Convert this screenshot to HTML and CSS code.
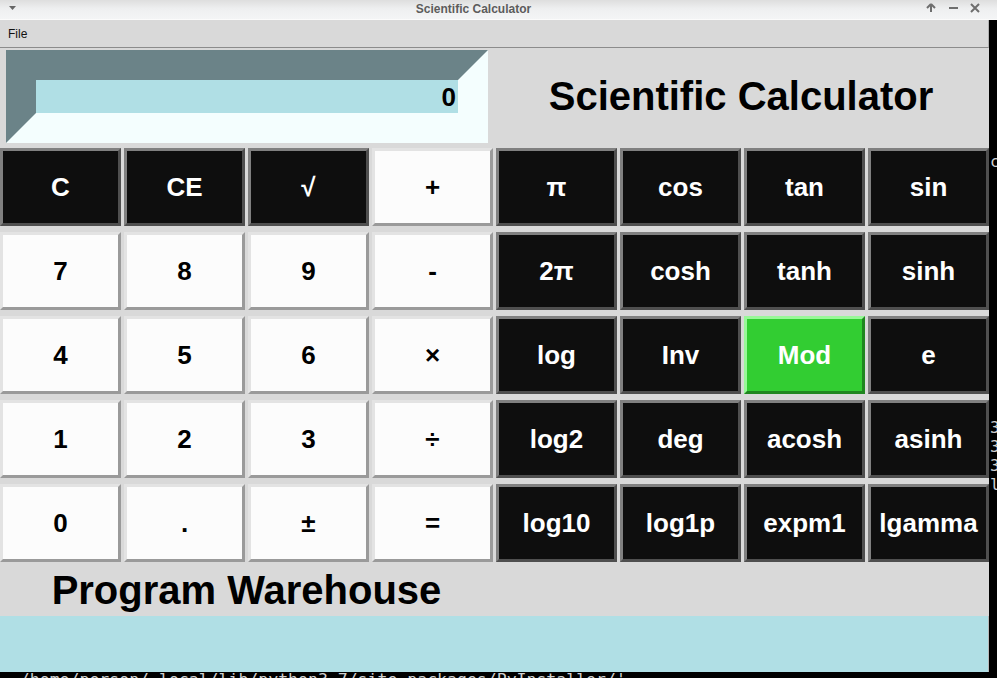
FILE: index.html
```html
<!DOCTYPE html>
<html>
<head>
<meta charset="utf-8">
<title>Scientific Calculator</title>
<link rel="stylesheet" href="styles.css">
</head>
<body>
<div class="titlebar">
  <div class="tb-left">
    <svg width="26" height="19" viewBox="0 0 26 19"><polygon points="9,6 16,6 12.5,10" fill="#666"/></svg>
  </div>
  <div class="tb-title">Scientific Calculator</div>
  <div class="tb-right">
    <svg width="76" height="19" viewBox="0 0 76 19">
      <path d="M10 4 L6 8 M10 4 L14 8 M10 4 V12" stroke="#6e6e6e" stroke-width="2" fill="none"/>
      <rect x="28" y="7" width="9" height="2" fill="#6e6e6e"/>
      <path d="M50 4 L58 12 M58 4 L50 12" stroke="#6e6e6e" stroke-width="2" fill="none"/>
    </svg>
  </div>
</div>
<div class="screen">
  <div class="window">
    <div class="menubar"><span class="menu-item">File</span></div>
    <div class="top">
      <div class="display-cell">
        <div class="display"><div class="entry">0</div></div>
      </div>
      <div class="heading">Scientific Calculator</div>
    </div>
    <div class="keys">
      <div class="key k-dark">C</div>
      <div class="key k-dark">CE</div>
      <div class="key k-dark">√</div>
      <div class="key k-light">+</div>
      <div class="key k-dark">π</div>
      <div class="key k-dark">cos</div>
      <div class="key k-dark">tan</div>
      <div class="key k-dark">sin</div>

      <div class="key k-light">7</div>
      <div class="key k-light">8</div>
      <div class="key k-light">9</div>
      <div class="key k-light">-</div>
      <div class="key k-dark">2π</div>
      <div class="key k-dark">cosh</div>
      <div class="key k-dark">tanh</div>
      <div class="key k-dark">sinh</div>

      <div class="key k-light">4</div>
      <div class="key k-light">5</div>
      <div class="key k-light">6</div>
      <div class="key k-light">×</div>
      <div class="key k-dark">log</div>
      <div class="key k-dark">Inv</div>
      <div class="key k-green">Mod</div>
      <div class="key k-dark">e</div>

      <div class="key k-light">1</div>
      <div class="key k-light">2</div>
      <div class="key k-light">3</div>
      <div class="key k-light">÷</div>
      <div class="key k-dark">log2</div>
      <div class="key k-dark">deg</div>
      <div class="key k-dark">acosh</div>
      <div class="key k-dark">asinh</div>

      <div class="key k-light">0</div>
      <div class="key k-light">.</div>
      <div class="key k-light">±</div>
      <div class="key k-light">=</div>
      <div class="key k-dark">log10</div>
      <div class="key k-dark">log1p</div>
      <div class="key k-dark">expm1</div>
      <div class="key k-dark">lgamma</div>
    </div>
    <div class="brand">Program Warehouse</div>
    <div class="status"></div>
  </div>
  <pre class="term-side">

 





c













3
3
3
l</pre>
</div>
<pre class="term-bottom">  /home/person/.local/lib/python3.7/site-packages/PyInstaller/'</pre>
</body>
</html>
```

FILE: styles.css
```css
html, body {
  margin: 0;
  padding: 0;
}
body {
  width: 997px;
  height: 678px;
  overflow: hidden;
  background: #000;
  font-family: "Liberation Sans", Arial, sans-serif;
}

.titlebar {
  display: flex;
  height: 19px;
  border-bottom: 1px solid #fbfbfb;
  background: linear-gradient(#dedede, #eeeff0 45%, #f4f5f6);
}
.tb-left {
  width: 26px;
  display: flex;
}
.tb-title {
  flex: 1;
  text-align: center;
  font-weight: bold;
  font-size: 12px;
  line-height: 18px;
  color: #5c5c5c;
}
.tb-right {
  width: 76px;
  display: flex;
}

.screen {
  display: flex;
  height: 652px;
}
.window {
  width: 989px;
  background: #d9d9d9;
  display: flex;
  flex-direction: column;
}
.menubar {
  height: 27px;
  border-bottom: 1px solid #8c8c8c;
  border-right: 1px solid #b0b0b0;
  display: flex;
  align-items: center;
  padding-left: 8px;
}
.menu-item {
  font-size: 12px;
  line-height: 24px;
  color: #111;
}

.top {
  display: flex;
  height: 100px;
}
.display-cell {
  width: 482px;
  padding: 2px 5px 5px 6px;
}
.display {
  height: 33px;
  border: 30px solid;
  border-color: #6b8388 #f4fefe #f4fefe #6b8388;
  background: #b0dfe5;
}
.entry {
  text-align: right;
  padding-right: 2px;
  font-weight: bold;
  font-size: 26px;
  line-height: 35px;
  color: #000;
}
.heading {
  flex: 1;
  text-align: center;
  font-weight: bold;
  font-size: 40px;
  line-height: 96px;
  color: #000;
}

.keys {
  display: grid;
  grid-template-columns: repeat(8, 121px);
  grid-auto-rows: 78px;
  column-gap: 3px;
  row-gap: 6px;
}
.key {
  border: 3px solid;
  display: flex;
  align-items: center;
  justify-content: center;
  font-weight: bold;
  font-size: 26px;
}
.k-dark {
  background: #0e0e0e;
  color: #fff;
  border-color: #808080 #4f4f4f #4f4f4f #808080;
}
.k-light {
  background: #fcfcfc;
  color: #000;
  border-color: #e3e3e3 #9a9a9a #9a9a9a #e3e3e3;
}
.k-green {
  background: #32cd32;
  color: #fff;
  border-color: #98f898 #1f861f #1f861f #98f898;
}

.brand {
  width: 493px;
  height: 54px;
  text-align: center;
  font-weight: bold;
  font-size: 40px;
  line-height: 56px;
  color: #000;
}
.status {
  height: 56px;
  background: #b0dfe5;
  border-right: 1px solid #b8b8b8;
}

.term-side {
  width: 8px;
  margin: -1px 0 0 0;
  padding-left: 1px;
  overflow: hidden;
  font-family: "DejaVu Sans Mono", monospace;
  font-size: 16px;
  line-height: 19px;
  color: #d0d0d0;
}
.term-bottom {
  margin: -2px 0 0 0;
  font-family: "DejaVu Sans Mono", monospace;
  font-size: 16.5px;
  line-height: 19px;
  color: #d0d0d0;
  white-space: pre;
}
```
